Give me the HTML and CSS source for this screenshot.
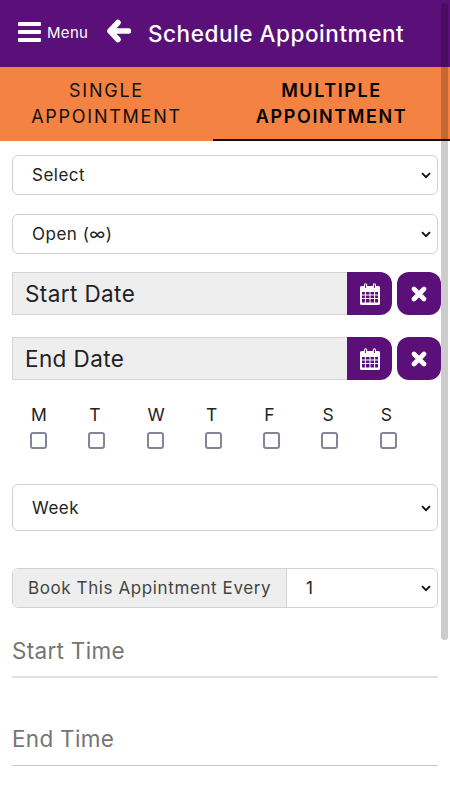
FILE: index.html
```html
<!DOCTYPE html>
<html lang="en">
<head>
<meta charset="utf-8">
<title>Schedule Appointment</title>
<link rel="stylesheet" href="styles.css">
</head>
<body>
<svg class="defs" width="0" height="0" aria-hidden="true">
  <symbol id="chev" viewBox="0 0 10 7"><path d="M1 1.200 5 5.200l4-4" fill="none" stroke="#111" stroke-width="1.900"/></symbol>
  <symbol id="cal" viewBox="0 0 20 22">
    <path fill-rule="evenodd" fill="#fff" d="M1.500 3H4V1.800a1.600 1.600 0 0 1 3.200 0V3h5.600V1.800a1.600 1.600 0 0 1 3.200 0V3h2.500A1.500 1.500 0 0 1 20 4.500V20.500A1.500 1.500 0 0 1 18.500 22H1.500A1.500 1.500 0 0 1 0 20.500V4.500A1.500 1.500 0 0 1 1.500 3ZM5.100 1.800V5h1V1.800a.5.5 0 0 0-1 0ZM13.900 1.800V5h1V1.800a.5.5 0 0 0-1 0ZM2 9v2.600h2.900V9ZM5.900 9v2.600h3.600V9ZM10.500 9v2.600h3.600V9ZM15.100 9v2.600h2.900V9ZM2 12.500v2.600h2.900v-2.600ZM5.900 12.500v2.600h3.600v-2.600ZM10.500 12.500v2.600h3.600v-2.600ZM15.100 12.500v2.600h2.900v-2.600ZM2 16v3.600h2.900V16ZM5.900 16v3.600h3.600V16ZM10.500 16v3.600h3.600V16ZM15.100 16v3.600h2.900V16Z"/>
  </symbol>
  <symbol id="x" viewBox="0 0 16 16"><path d="M3 3l10 10M13 3 3 13" stroke="#fff" stroke-width="4.600" stroke-linecap="round" fill="none"/></symbol>
</svg>

<header class="topbar">
  <div class="menu">
    <svg class="burger" viewBox="0 0 23 20" aria-hidden="true"><path d="M1 0h21a1 1 0 0 1 1 1v2a1 1 0 0 1-1 1H1a1 1 0 0 1-1-1V1a1 1 0 0 1 1-1ZM1 8h21a1 1 0 0 1 1 1v2a1 1 0 0 1-1 1H1a1 1 0 0 1-1-1V9a1 1 0 0 1 1-1ZM1 16h21a1 1 0 0 1 1 1v2a1 1 0 0 1-1 1H1a1 1 0 0 1-1-1v-2a1 1 0 0 1 1-1Z" fill="#fff"/></svg>
    <span class="menu-label">Menu</span>
  </div>
  <svg class="back" viewBox="0 0 24 24" aria-hidden="true"><path d="M11 3.500 3 12l8 8.500M4 12H21.500" fill="none" stroke="#fff" stroke-width="5.600" stroke-linecap="round" stroke-linejoin="round"/></svg>
  <h1 class="title">Schedule Appointment</h1>
</header>

<nav class="tabs">
  <div class="tab">SINGLE<br>APPOINTMENT</div>
  <div class="tab active">MULTIPLE<br>APPOINTMENT</div>
</nav>

<main class="form">
  <div class="select-wrap first">
    <select class="select"><option>Select</option></select>
    <svg class="chev"><use href="#chev"/></svg>
  </div>
  <div class="select-wrap second">
    <select class="select"><option>Open (∞)</option></select>
    <svg class="chev"><use href="#chev"/></svg>
  </div>

  <div class="date-row start">
    <input class="date-input" placeholder="Start Date">
    <button class="cal-btn"><svg class="cal"><use href="#cal"/></svg></button>
    <button class="clear-btn"><svg class="x"><use href="#x"/></svg></button>
  </div>
  <div class="date-row end">
    <input class="date-input" placeholder="End Date">
    <button class="cal-btn"><svg class="cal"><use href="#cal"/></svg></button>
    <button class="clear-btn"><svg class="x"><use href="#x"/></svg></button>
  </div>

  <div class="days">
    <label class="day">M<span class="box"></span></label>
    <label class="day">T<span class="box"></span></label>
    <label class="day">W<span class="box"></span></label>
    <label class="day">T<span class="box"></span></label>
    <label class="day">F<span class="box"></span></label>
    <label class="day">S<span class="box"></span></label>
    <label class="day">S<span class="box"></span></label>
  </div>

  <div class="select-wrap week">
    <select class="select"><option>Week</option></select>
    <svg class="chev"><use href="#chev"/></svg>
  </div>

  <div class="every">
    <span class="every-label">Book This Appintment Every</span>
    <div class="every-select">
      <select class="select plain"><option>1</option></select>
      <svg class="chev"><use href="#chev"/></svg>
    </div>
  </div>

  <input class="line-input start-time" placeholder="Start Time">
  <input class="line-input end-time" placeholder="End Time">
</main>

<div class="scrollbar" aria-hidden="true"></div>
</body>
</html>
```
FILE: styles.css
```css
* { box-sizing: border-box; }
html, body { margin: 0; height: 800px; overflow: hidden; background: #fff; }
body { font-family: "Inter", "Open Sans", sans-serif; color: #111; position: relative; }
.defs { position: absolute; }

.topbar { height: 67px; background: #5a1078; display: flex; align-items: center; color: #fff; }
.menu { display: flex; align-items: center; margin-left: 18px; width: 89px; }
.burger { width: 23px; height: 20px; margin-top: -3px; }
.menu-label { font-size: 15px; font-weight: 400; margin-left: 6px; margin-top: -3px; letter-spacing: .3px; }
.back { width: 24px; height: 24px; margin-top: -5px; }
.title { margin: 0 0 0 17px; font-size: 22.500px; font-weight: 500; letter-spacing: .55px; white-space: nowrap; }

.tabs { height: 74px; display: grid; grid-template-columns: 213px 237px; background: #f48243; }
.tab { text-align: center; font-size: 18px; line-height: 26px; letter-spacing: 1.750px; padding-top: 11px; font-weight: 400; color: #111; }
.tab.active { font-weight: 600; color: #000; border-bottom: 2px solid #111; letter-spacing: 1.600px; }

.form { padding: 14px 12px 0; }
.select-wrap { position: relative; width: 426px; }
.select-wrap.first { height: 40px; }
.select-wrap.second { height: 40px; margin-top: 19px; }
.select-wrap.week { height: 47px; }
.select {
  appearance: none; width: 100%; height: 100%; border: 1px solid #d0d0d0; border-radius: 6px;
  background: #fff; font: 400 17px "Inter", "Open Sans", sans-serif; letter-spacing: .5px; color: #222; padding: 0 0 0 19px;
}
.select.plain { border: 0; border-radius: 0; background: transparent; }
.chev { position: absolute; right: 7px; top: 50%; width: 10px; height: 7px; margin-top: -3px; }

.date-row { display: flex; height: 43px; width: 429px; }
.date-row.start { margin-top: 18px; }
.date-row.end { margin-top: 22px; }
.date-input {
  width: 335px; height: 100%; border: 1px solid #d4d4d4; border-right: 0; border-radius: 0; background: #eee;
  font: 400 22.500px "Inter", "Open Sans", sans-serif; letter-spacing: .4px; padding: 0 13px 1px 12px; outline: 0;
}
.date-input::placeholder { color: #222; opacity: 1; }
.cal-btn, .clear-btn { border: 0; padding: 0; background: #5a1078; display: flex; align-items: center; justify-content: center; }
.cal-btn { width: 45px; border-radius: 0 12px 12px 0; }
.clear-btn { width: 44px; margin-left: 5px; border-radius: 12px; }
.cal { width: 20px; height: 22px; }
.x { width: 16px; height: 16px; }

.days { display: grid; grid-template-columns: repeat(7, 58.300px); margin-top: 25px; height: 79px; padding-left: 18px; }
.day { display: flex; flex-direction: column; align-items: flex-start; font-size: 17.500px; line-height: 20px; color: #222; padding-left: 1px; }
.box { width: 17px; height: 17px; border: 2px solid #85859a; border-radius: 3px; margin: 7px 0 0 -1px; background: #fff; }

.every { display: flex; height: 40px; width: 426px; margin-top: 37px; border: 1px solid #d0d0d0; border-radius: 6px; overflow: hidden; }
.every-label { width: 274px; background: #eee; border-right: 1px solid #d0d0d0; font-size: 17px; letter-spacing: .6px; color: #444; display: flex; align-items: center; padding-left: 15px; white-space: nowrap; }
.every-select { position: relative; flex: 1; }
.every-select .chev { right: 6px; }

.line-input {
  display: block; width: 426px; border: 0; border-bottom: 2px solid #e0e0e0; outline: 0;
  font: 400 22.500px "Inter", "Open Sans", sans-serif; letter-spacing: .3px; padding: 0 0 8px; background: transparent;
}
.line-input::placeholder { color: #757575; opacity: 1; }
.start-time { margin-top: 24px; height: 46px; }
.end-time { margin-top: 41px; border-bottom: 1px solid #c8c8c8; height: 47px; }

.scrollbar { position: absolute; left: 441px; top: 3px; width: 7px; height: 637px; border-radius: 4px; background: rgba(0,0,0,.2); }
```
